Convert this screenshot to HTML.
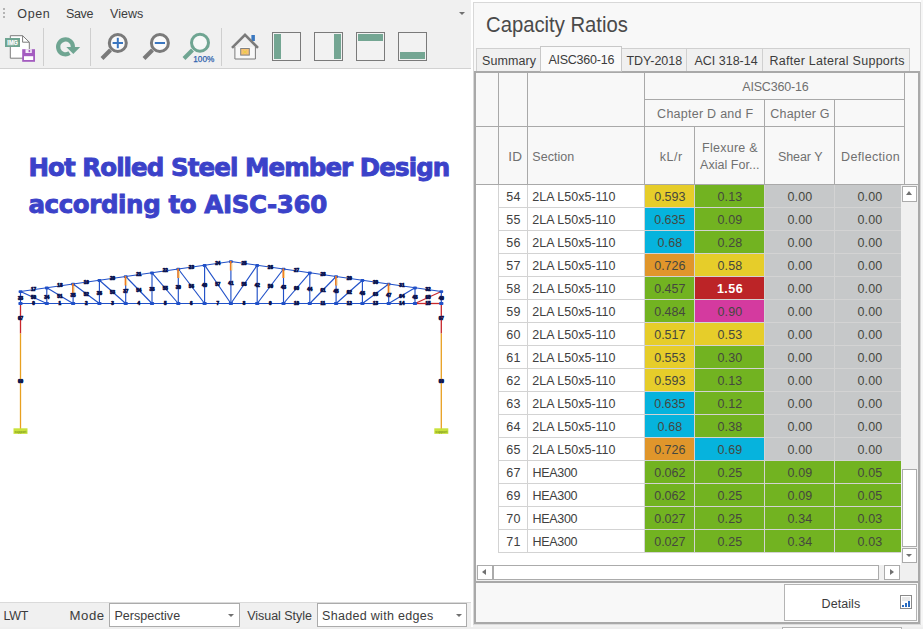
<!DOCTYPE html>
<html><head><meta charset="utf-8"><title>Capacity Ratios</title>
<style>
html,body{margin:0;padding:0;}
body{width:923px;height:629px;position:relative;overflow:hidden;background:#fff;font-family:"Liberation Sans",sans-serif;font-size:13px;color:#3c3c3c;}
div,span{position:absolute;box-sizing:border-box;white-space:nowrap;}
span{z-index:5;}
.t{line-height:16px;height:16px;}
/* left */
#lbar{left:0;top:0;width:471px;height:69px;background:#f0f0f0;border-bottom:1px solid #d2d2d2;}
#status{left:0;top:602px;width:471px;height:25px;background:#f0f0f0;border-top:1px solid #dadada;}
.sel{background:#fff;border:1px solid #ababab;height:24px;top:603px;}
.arr{width:0;height:0;border-left:3.5px solid transparent;border-right:3.5px solid transparent;border-top:3.5px solid #707070;}
.sep{width:1px;background:#cfcfcf;top:28px;height:38px;}
#title{left:29px;top:148px;font-family:"DejaVu Sans","Liberation Sans",sans-serif;font-weight:bold;color:#3b42c9;font-size:24px;line-height:37px;}
/* right */
#rp{left:473px;top:2px;width:448px;height:623px;background:#f8f8f8;border:1px solid #d8d8d8;}
#cap{left:487px;top:10px;font-size:21px;line-height:28px;color:#444;}
.tab{top:48px;height:24px;background:#f0f0f0;border:1px solid #d0d0d0;border-bottom:none;font-size:13px;line-height:22px;text-align:center;color:#3c3c3c;}
.tab.act{top:46px;height:27px;background:#fafafa;z-index:3;line-height:24px;border:1px solid #c8c8c8;border-bottom:1px solid #bdbdbd;height:26px;}
#grid{left:474px;top:71px;width:446px;height:512px;border:2px solid #a9a9a9;background:#f8f8f8;}
.vl{width:1px;background:#a9a9a9;}
.hl{height:1px;background:#a9a9a9;}
.hd{color:#6e6e6e;font-size:13px;line-height:16px;text-align:center;}
.c{height:23px;line-height:22px;font-size:13px;color:#404040;border-bottom:1px solid #d3d3d3;}
.c.id{left:498px;width:30px;background:#fff;border-left:1px solid #d3d3d3;border-right:1px solid #d3d3d3;text-align:center;}
.c.sec{left:528px;width:117px;background:#fff;border-right:1px solid #d3d3d3;padding-left:4px;}
.c.v{text-align:center;border-right:1px solid #d3d3d3;color:#46483c;}
.sb{background:#fff;border:1px solid #ababab;}
</style></head><body>

<!-- LEFT PANEL -->
<div id="lbar"></div>
<div style="left:3px;top:8px;width:2px;height:2px;background:#b4b4b4"></div>
<div style="left:3px;top:12px;width:2px;height:2px;background:#b4b4b4"></div>
<div style="left:3px;top:16px;width:2px;height:2px;background:#b4b4b4"></div>
<div class="arr" style="left:459px;top:12px;border-left-width:3px;border-right-width:3px;border-top-width:3px;"></div>
<div class="sep" style="left:43px"></div>
<div class="sep" style="left:90px"></div>
<div class="sep" style="left:221px"></div>

<svg style="position:absolute;left:0;top:24px" width="471" height="44" viewBox="0 24 471 44">
<!-- icon 1: save image -->
<path d="M10.3 35.7 H22.6 L29.3 42.2 V58.2 H10.3 Z" fill="#fff" stroke="#7c7c7c" stroke-width="1"/>
<path d="M22.6 35.7 V42.2 H29.3" fill="none" stroke="#7c7c7c" stroke-width="1"/>
<rect x="5" y="38" width="15" height="9" fill="#6fa592"/>
<text x="12.6" y="45.1" font-family="Liberation Sans, sans-serif" font-size="6.6" font-weight="bold" fill="#fff" stroke="#fff" stroke-width="0.25" text-anchor="middle" textLength="10.5" lengthAdjust="spacingAndGlyphs">IMG</text>
<rect x="22.2" y="49.2" width="12.8" height="12.6" fill="#a45cc0"/>
<rect x="25.5" y="49.2" width="6.3" height="3.8" fill="#f4ecf8"/>
<rect x="28.6" y="50" width="1.6" height="2.2" fill="#a45cc0"/>
<rect x="24" y="56.2" width="9.2" height="3.8" fill="#fff"/>
<!-- icon 2: refresh -->
<path d="M72.9 46.9 A7.4 7.4 0 1 0 69.5 53.1" fill="none" stroke="#6fa592" stroke-width="4.2"/>
<path d="M66.3 47 H80.2 L73.3 53.9 Z" fill="#6fa592"/>
<!-- zoom in -->
<g stroke="#7a7a7a" fill="none">
<line x1="110.5" y1="50" x2="102" y2="58.5" stroke-width="4"/>
<circle cx="117.8" cy="43" r="8.5" stroke-width="3" fill="#fafafa"/>
<line x1="152.5" y1="50" x2="144" y2="58.5" stroke-width="4"/>
<circle cx="159.9" cy="43" r="8.5" stroke-width="3" fill="#fafafa"/>
</g>
<g stroke="#3a76c0" stroke-width="2" fill="none">
<line x1="112.6" y1="43" x2="123" y2="43"/><line x1="117.8" y1="37.8" x2="117.8" y2="48.2"/>
<line x1="154.8" y1="43" x2="165" y2="43"/>
</g>
<!-- zoom 100 -->
<g stroke="#6fa592" fill="none">
<line x1="192.5" y1="50" x2="184" y2="58.5" stroke-width="4"/>
<circle cx="200" cy="42.8" r="8.5" stroke-width="3" fill="#f6f8f7"/>
</g>
<text x="193.3" y="61.8" font-family="Liberation Sans, sans-serif" font-size="8.6" fill="#2f62ae" stroke="#2f62ae" stroke-width="0.25" textLength="21" lengthAdjust="spacingAndGlyphs">100%</text>
<!-- home -->
<rect x="251.4" y="35" width="3.5" height="6" fill="#3a78c0"/>
<path d="M234.9 47 V59 H255.4 V47" fill="#f8f8f8" stroke="#7a7a7a" stroke-width="1"/>
<path d="M232 47.8 L245 34.8 L258 47.8" fill="none" stroke="#7a7a7a" stroke-width="2.6" stroke-linejoin="miter"/>
<rect x="240.7" y="48.5" width="8.6" height="6.6" fill="#f8c272" stroke="#808080" stroke-width="1"/>
<path d="M243 50.5 l4 3 m0 -3 l-4 3" stroke="#e8d040" stroke-width="0.9"/>
<!-- panels -->
<g fill="#f2f2f2" stroke="#7a7a7a" stroke-width="1">
<rect x="272.5" y="32.5" width="28" height="28"/>
<rect x="314.5" y="32.5" width="28" height="28"/>
<rect x="356.5" y="32.5" width="28" height="28"/>
<rect x="398.5" y="32.5" width="28" height="28"/>
</g>
<g fill="#74a693">
<rect x="274" y="34" width="7" height="25"/>
<rect x="334" y="34" width="7" height="25"/>
<rect x="358" y="34" width="25" height="7"/>
<rect x="400" y="52" width="25" height="7"/>
</g>

</svg>


<svg style="position:absolute;left:0;top:250px" width="471" height="200" viewBox="0 250 471 200" font-family="Liberation Sans, sans-serif" font-size="4.6" font-weight="bold" text-anchor="middle" fill="#0c1550">
<style>.tl text{stroke:#0c1550;stroke-width:0.7px}</style><g class="tl">
<line x1="20.5" y1="303.5" x2="20.5" y2="333.5" stroke="#c8282c" stroke-width="1.3"/>
<line x1="20.5" y1="333.5" x2="20.5" y2="431.0" stroke="#e8a020" stroke-width="1.3"/>
<line x1="441.3" y1="303.5" x2="441.3" y2="333.5" stroke="#c8282c" stroke-width="1.3"/>
<line x1="441.3" y1="333.5" x2="441.3" y2="431.0" stroke="#e8a020" stroke-width="1.3"/>
<line x1="20.5" y1="303.5" x2="441.3" y2="303.5" stroke="#2050c8" stroke-width="1.1"/>
<line x1="20.5" y1="291.5" x2="46.8" y2="287.8" stroke="#2050c8" stroke-width="1.1"/>
<line x1="46.8" y1="287.8" x2="73.1" y2="284.0" stroke="#2050c8" stroke-width="1.1"/>
<line x1="73.1" y1="284.0" x2="99.4" y2="280.2" stroke="#2050c8" stroke-width="1.1"/>
<line x1="99.4" y1="280.2" x2="125.7" y2="276.5" stroke="#2050c8" stroke-width="1.1"/>
<line x1="125.7" y1="276.5" x2="152.0" y2="272.8" stroke="#2050c8" stroke-width="1.1"/>
<line x1="152.0" y1="272.8" x2="178.3" y2="269.0" stroke="#2050c8" stroke-width="1.1"/>
<line x1="178.3" y1="269.0" x2="204.6" y2="265.2" stroke="#2050c8" stroke-width="1.1"/>
<line x1="204.6" y1="265.2" x2="230.9" y2="261.5" stroke="#2050c8" stroke-width="1.1"/>
<line x1="230.9" y1="261.5" x2="257.2" y2="265.2" stroke="#2050c8" stroke-width="1.1"/>
<line x1="257.2" y1="265.2" x2="283.5" y2="269.0" stroke="#2050c8" stroke-width="1.1"/>
<line x1="283.5" y1="269.0" x2="309.8" y2="272.8" stroke="#2050c8" stroke-width="1.1"/>
<line x1="309.8" y1="272.8" x2="336.1" y2="276.5" stroke="#2050c8" stroke-width="1.1"/>
<line x1="336.1" y1="276.5" x2="362.4" y2="280.2" stroke="#2050c8" stroke-width="1.1"/>
<line x1="362.4" y1="280.2" x2="388.7" y2="284.0" stroke="#2050c8" stroke-width="1.1"/>
<line x1="388.7" y1="284.0" x2="415.0" y2="287.8" stroke="#2050c8" stroke-width="1.1"/>
<line x1="415.0" y1="287.8" x2="441.3" y2="291.5" stroke="#2050c8" stroke-width="1.1"/>
<line x1="20.5" y1="291.5" x2="20.5" y2="303.5" stroke="#2050c8" stroke-width="1.15"/>
<line x1="46.8" y1="287.8" x2="46.8" y2="303.5" stroke="#2050c8" stroke-width="1.15"/>
<line x1="73.1" y1="284.0" x2="73.1" y2="303.5" stroke="#2050c8" stroke-width="1.15"/>
<line x1="99.4" y1="280.2" x2="99.4" y2="303.5" stroke="#2050c8" stroke-width="1.15"/>
<line x1="125.7" y1="276.5" x2="125.7" y2="303.5" stroke="#2050c8" stroke-width="1.15"/>
<line x1="152.0" y1="272.8" x2="152.0" y2="303.5" stroke="#2050c8" stroke-width="1.15"/>
<line x1="178.3" y1="269.0" x2="178.3" y2="303.5" stroke="#2050c8" stroke-width="1.15"/>
<line x1="204.6" y1="265.2" x2="204.6" y2="303.5" stroke="#2050c8" stroke-width="1.15"/>
<line x1="230.9" y1="261.5" x2="230.9" y2="303.5" stroke="#2050c8" stroke-width="1.15"/>
<line x1="257.2" y1="265.2" x2="257.2" y2="303.5" stroke="#2050c8" stroke-width="1.15"/>
<line x1="283.5" y1="269.0" x2="283.5" y2="303.5" stroke="#2050c8" stroke-width="1.15"/>
<line x1="309.8" y1="272.8" x2="309.8" y2="303.5" stroke="#2050c8" stroke-width="1.15"/>
<line x1="336.1" y1="276.5" x2="336.1" y2="303.5" stroke="#2050c8" stroke-width="1.15"/>
<line x1="362.4" y1="280.2" x2="362.4" y2="303.5" stroke="#2050c8" stroke-width="1.15"/>
<line x1="388.7" y1="284.0" x2="388.7" y2="303.5" stroke="#2050c8" stroke-width="1.15"/>
<line x1="415.0" y1="287.8" x2="415.0" y2="303.5" stroke="#2050c8" stroke-width="1.15"/>
<line x1="441.3" y1="291.5" x2="441.3" y2="303.5" stroke="#2050c8" stroke-width="1.15"/>
<line x1="20.5" y1="291.5" x2="46.8" y2="303.5" stroke="#2050c8" stroke-width="1.15"/>
<line x1="46.8" y1="287.8" x2="73.1" y2="303.5" stroke="#2050c8" stroke-width="1.15"/>
<line x1="73.1" y1="284.0" x2="99.4" y2="303.5" stroke="#2050c8" stroke-width="1.15"/>
<line x1="99.4" y1="280.2" x2="125.7" y2="303.5" stroke="#2050c8" stroke-width="1.15"/>
<line x1="125.7" y1="276.5" x2="152.0" y2="303.5" stroke="#2050c8" stroke-width="1.15"/>
<line x1="152.0" y1="272.8" x2="178.3" y2="303.5" stroke="#2050c8" stroke-width="1.15"/>
<line x1="178.3" y1="269.0" x2="204.6" y2="303.5" stroke="#2050c8" stroke-width="1.15"/>
<line x1="204.6" y1="265.2" x2="230.9" y2="303.5" stroke="#2050c8" stroke-width="1.15"/>
<line x1="257.2" y1="265.2" x2="230.9" y2="303.5" stroke="#2050c8" stroke-width="1.15"/>
<line x1="283.5" y1="269.0" x2="257.2" y2="303.5" stroke="#2050c8" stroke-width="1.15"/>
<line x1="309.8" y1="272.8" x2="283.5" y2="303.5" stroke="#2050c8" stroke-width="1.15"/>
<line x1="336.1" y1="276.5" x2="309.8" y2="303.5" stroke="#2050c8" stroke-width="1.15"/>
<line x1="362.4" y1="280.2" x2="336.1" y2="303.5" stroke="#2050c8" stroke-width="1.15"/>
<line x1="388.7" y1="284.0" x2="362.4" y2="303.5" stroke="#2050c8" stroke-width="1.15"/>
<line x1="415.0" y1="287.8" x2="388.7" y2="303.5" stroke="#2050c8" stroke-width="1.15"/>
<line x1="441.3" y1="291.5" x2="415.0" y2="303.5" stroke="#c8282c" stroke-width="1.15"/>
<line x1="415.0" y1="303.5" x2="441.3" y2="303.5" stroke="#c8282c" stroke-width="1.3"/>
<rect x="18.4" y="302.0" width="4.2" height="3" rx="0.8" fill="#2050c8"/>
<rect x="18.6" y="290.3" width="3.8" height="2.8" rx="0.8" fill="#2050c8"/>
<rect x="44.7" y="302.0" width="4.2" height="3" rx="0.8" fill="#2050c8"/>
<rect x="44.9" y="286.6" width="3.8" height="2.8" rx="0.8" fill="#2050c8"/>
<rect x="71.0" y="302.0" width="4.2" height="3" rx="0.8" fill="#2050c8"/>
<rect x="71.2" y="282.8" width="3.8" height="2.8" rx="0.8" fill="#2050c8"/>
<rect x="97.3" y="302.0" width="4.2" height="3" rx="0.8" fill="#2050c8"/>
<rect x="97.5" y="279.1" width="3.8" height="2.8" rx="0.8" fill="#2050c8"/>
<rect x="123.6" y="302.0" width="4.2" height="3" rx="0.8" fill="#2050c8"/>
<rect x="123.8" y="275.3" width="3.8" height="2.8" rx="0.8" fill="#2050c8"/>
<rect x="149.9" y="302.0" width="4.2" height="3" rx="0.8" fill="#2050c8"/>
<rect x="150.1" y="271.6" width="3.8" height="2.8" rx="0.8" fill="#2050c8"/>
<rect x="176.2" y="302.0" width="4.2" height="3" rx="0.8" fill="#2050c8"/>
<rect x="176.4" y="267.8" width="3.8" height="2.8" rx="0.8" fill="#2050c8"/>
<rect x="202.5" y="302.0" width="4.2" height="3" rx="0.8" fill="#2050c8"/>
<rect x="202.7" y="264.1" width="3.8" height="2.8" rx="0.8" fill="#2050c8"/>
<rect x="228.8" y="302.0" width="4.2" height="3" rx="0.8" fill="#2050c8"/>
<rect x="229.0" y="260.3" width="3.8" height="2.8" rx="0.8" fill="#2050c8"/>
<rect x="255.1" y="302.0" width="4.2" height="3" rx="0.8" fill="#2050c8"/>
<rect x="255.3" y="264.1" width="3.8" height="2.8" rx="0.8" fill="#2050c8"/>
<rect x="281.4" y="302.0" width="4.2" height="3" rx="0.8" fill="#2050c8"/>
<rect x="281.6" y="267.8" width="3.8" height="2.8" rx="0.8" fill="#2050c8"/>
<rect x="307.7" y="302.0" width="4.2" height="3" rx="0.8" fill="#2050c8"/>
<rect x="307.9" y="271.6" width="3.8" height="2.8" rx="0.8" fill="#2050c8"/>
<rect x="334.0" y="302.0" width="4.2" height="3" rx="0.8" fill="#2050c8"/>
<rect x="334.2" y="275.3" width="3.8" height="2.8" rx="0.8" fill="#2050c8"/>
<rect x="360.3" y="302.0" width="4.2" height="3" rx="0.8" fill="#2050c8"/>
<rect x="360.5" y="279.1" width="3.8" height="2.8" rx="0.8" fill="#2050c8"/>
<rect x="386.6" y="302.0" width="4.2" height="3" rx="0.8" fill="#2050c8"/>
<rect x="386.8" y="282.8" width="3.8" height="2.8" rx="0.8" fill="#2050c8"/>
<rect x="412.9" y="302.0" width="4.2" height="3" rx="0.8" fill="#2050c8"/>
<rect x="413.1" y="286.6" width="3.8" height="2.8" rx="0.8" fill="#2050c8"/>
<rect x="439.2" y="302.0" width="4.2" height="3" rx="0.8" fill="#2050c8"/>
<rect x="439.4" y="290.3" width="3.8" height="2.8" rx="0.8" fill="#2050c8"/>
<line x1="72.9" y1="283.5" x2="72.9" y2="293.0" stroke="#f07a1e" stroke-width="1.7"/>
<line x1="74.1" y1="286.0" x2="74.1" y2="293.0" stroke="#f8dc98" stroke-width="1.1"/>
<line x1="125.5" y1="276.0" x2="125.5" y2="285.5" stroke="#f07a1e" stroke-width="1.7"/>
<line x1="126.7" y1="278.5" x2="126.7" y2="285.5" stroke="#f8dc98" stroke-width="1.1"/>
<line x1="178.1" y1="268.5" x2="178.1" y2="278.0" stroke="#f07a1e" stroke-width="1.7"/>
<line x1="179.3" y1="271.0" x2="179.3" y2="278.0" stroke="#f8dc98" stroke-width="1.1"/>
<line x1="230.7" y1="261.0" x2="230.7" y2="270.5" stroke="#f07a1e" stroke-width="1.7"/>
<line x1="231.9" y1="263.5" x2="231.9" y2="270.5" stroke="#f8dc98" stroke-width="1.1"/>
<line x1="283.3" y1="268.5" x2="283.3" y2="278.0" stroke="#f07a1e" stroke-width="1.7"/>
<line x1="284.5" y1="271.0" x2="284.5" y2="278.0" stroke="#f8dc98" stroke-width="1.1"/>
<line x1="335.9" y1="276.0" x2="335.9" y2="285.5" stroke="#f07a1e" stroke-width="1.7"/>
<line x1="337.1" y1="278.5" x2="337.1" y2="285.5" stroke="#f8dc98" stroke-width="1.1"/>
<line x1="388.5" y1="283.5" x2="388.5" y2="293.0" stroke="#f07a1e" stroke-width="1.7"/>
<line x1="389.7" y1="286.0" x2="389.7" y2="293.0" stroke="#f8dc98" stroke-width="1.1"/>
<text x="33.6" y="305.2">0</text>
<text x="33.6" y="291.0">17</text>
<text x="59.9" y="305.2">1</text>
<text x="59.9" y="287.3">18</text>
<text x="86.2" y="305.2">2</text>
<text x="86.2" y="283.5">19</text>
<text x="112.6" y="305.2">3</text>
<text x="112.6" y="279.8">20</text>
<text x="138.8" y="305.2">4</text>
<text x="138.8" y="276.0">21</text>
<text x="165.2" y="305.2">5</text>
<text x="165.2" y="272.3">22</text>
<text x="191.4" y="305.2">6</text>
<text x="191.4" y="268.5">23</text>
<text x="217.8" y="305.2">7</text>
<text x="217.8" y="264.8">24</text>
<text x="244.1" y="305.2">8</text>
<text x="244.1" y="264.8">25</text>
<text x="270.4" y="305.2">9</text>
<text x="270.4" y="268.5">26</text>
<text x="296.6" y="305.2">10</text>
<text x="296.6" y="272.3">27</text>
<text x="323.0" y="305.2">11</text>
<text x="323.0" y="276.0">28</text>
<text x="349.2" y="305.2">12</text>
<text x="349.2" y="279.8">29</text>
<text x="375.6" y="305.2">13</text>
<text x="375.6" y="283.5">30</text>
<text x="401.9" y="305.2">14</text>
<text x="401.9" y="287.3">31</text>
<text x="428.1" y="305.2">15</text>
<text x="428.1" y="291.0">32</text>
<text x="20.5" y="300.4">33</text>
<text x="46.8" y="298.5">34</text>
<text x="73.1" y="296.6">35</text>
<text x="99.4" y="294.8">36</text>
<text x="125.7" y="292.9">37</text>
<text x="152.0" y="291.0">38</text>
<text x="178.3" y="289.1">39</text>
<text x="204.6" y="287.3">40</text>
<text x="230.9" y="285.4">41</text>
<text x="257.2" y="287.3">42</text>
<text x="283.5" y="289.1">43</text>
<text x="309.8" y="291.0">44</text>
<text x="336.1" y="292.9">45</text>
<text x="362.4" y="294.8">46</text>
<text x="388.7" y="296.6">47</text>
<text x="415.0" y="298.5">48</text>
<text x="441.3" y="300.4">49</text>
<text x="33.6" y="299.4">50</text>
<text x="59.9" y="297.5">51</text>
<text x="86.2" y="295.6">52</text>
<text x="112.6" y="293.8">53</text>
<text x="138.8" y="291.9">54</text>
<text x="165.2" y="290.0">55</text>
<text x="191.4" y="288.1">56</text>
<text x="217.8" y="286.3">57</text>
<text x="244.1" y="286.3">58</text>
<text x="270.4" y="288.1">59</text>
<text x="296.6" y="290.0">60</text>
<text x="323.0" y="291.9">61</text>
<text x="349.2" y="293.8">62</text>
<text x="375.6" y="295.6">63</text>
<text x="401.9" y="297.5">64</text>
<text x="428.1" y="299.4">65</text>
<text x="20.5" y="320.4">67</text>
<text x="20.5" y="383.4">69</text>
<text x="441.3" y="320.4">67</text>
<text x="441.3" y="383.4">69</text>
<rect x="13.5" y="428.3" width="14" height="5.6" fill="#c9e23c"/>
<text x="20.5" y="432.6" style="font-size:3.2px;fill:#7a9a20;stroke:none">support</text>
<rect x="434.3" y="428.3" width="14" height="5.6" fill="#c9e23c"/>
<text x="441.3" y="432.6" style="font-size:3.2px;fill:#7a9a20;stroke:none">support</text>
</g></svg>

<div id="status"></div>
<div class="sel" style="left:109px;width:131px;"></div>
<div class="arr" style="left:228px;top:614px;"></div>
<div class="sel" style="left:317px;width:150px;"></div>
<div class="arr" style="left:456px;top:614px;"></div>

<!-- RIGHT PANEL -->
<div style="left:921px;top:0;width:2px;height:625px;background:#f6f6f6"></div>
<div id="rp"></div>
<div class="tab" style="left:476px;width:65px;"></div>
<div class="tab act" style="left:540px;width:82px;"></div>
<div class="tab" style="left:621px;width:66px;"></div>
<div class="tab" style="left:686px;width:77px;"></div>
<div class="tab" style="left:762px;width:148px;"></div>

<div id="grid"></div>
<!-- header lines -->
<div class="vl" style="left:498px;top:73px;height:112px"></div>
<div class="vl" style="left:527px;top:73px;height:112px"></div>
<div class="vl" style="left:644px;top:73px;height:112px"></div>
<div class="vl" style="left:694px;top:126px;height:59px"></div>
<div class="vl" style="left:764px;top:99px;height:86px"></div>
<div class="vl" style="left:834px;top:99px;height:86px"></div>
<div class="vl" style="left:904px;top:73px;height:112px"></div>
<div class="hl" style="left:644px;top:99px;width:261px"></div>
<div class="hl" style="left:476px;top:126px;width:429px"></div>
<div class="hl" style="left:476px;top:184px;width:442px"></div>

<!-- body white area -->
<div style="left:476px;top:185px;width:442px;height:381px;background:#fff"></div>
<div class="c id" style="top:185px"></div>
<div class="c sec" style="top:185px"></div>
<span style="left:506.3px;top:189px;font:normal 12.5px/16px 'Liberation Sans',sans-serif;letter-spacing:0.30px;color:#404040;">54</span>
<span style="left:532.3px;top:189px;font:normal 12.5px/16px 'Liberation Sans',sans-serif;letter-spacing:0.00px;color:#404040;">2LA L50x5-110</span>
<div class="c v" style="top:185px;left:645px;width:50px;background:#e6cd2a;"></div>
<span style="left:654.3px;top:189px;font:normal 12.5px/16px 'Liberation Sans',sans-serif;letter-spacing:-0.05px;color:#45473f;">0.593</span>
<div class="c v" style="top:185px;left:695px;width:70px;background:#72b321;"></div>
<span style="left:717.5px;top:189px;font:normal 12.5px/16px 'Liberation Sans',sans-serif;letter-spacing:0.12px;color:#45473f;">0.13</span>
<div class="c v" style="top:185px;left:765px;width:70px;background:#c6c8c9;"></div>
<span style="left:787.5px;top:189px;font:normal 12.5px/16px 'Liberation Sans',sans-serif;letter-spacing:0.12px;color:#45473f;">0.00</span>
<div class="c v" style="top:185px;left:835px;width:70px;background:#c6c8c9;"></div>
<span style="left:857.5px;top:189px;font:normal 12.5px/16px 'Liberation Sans',sans-serif;letter-spacing:0.12px;color:#45473f;">0.00</span>
<div class="c id" style="top:208px"></div>
<div class="c sec" style="top:208px"></div>
<span style="left:506.3px;top:212px;font:normal 12.5px/16px 'Liberation Sans',sans-serif;letter-spacing:0.30px;color:#404040;">55</span>
<span style="left:532.3px;top:212px;font:normal 12.5px/16px 'Liberation Sans',sans-serif;letter-spacing:0.00px;color:#404040;">2LA L50x5-110</span>
<div class="c v" style="top:208px;left:645px;width:50px;background:#06b3dd;"></div>
<span style="left:654.3px;top:212px;font:normal 12.5px/16px 'Liberation Sans',sans-serif;letter-spacing:-0.05px;color:#45473f;">0.635</span>
<div class="c v" style="top:208px;left:695px;width:70px;background:#72b321;"></div>
<span style="left:717.5px;top:212px;font:normal 12.5px/16px 'Liberation Sans',sans-serif;letter-spacing:0.12px;color:#45473f;">0.09</span>
<div class="c v" style="top:208px;left:765px;width:70px;background:#c6c8c9;"></div>
<span style="left:787.5px;top:212px;font:normal 12.5px/16px 'Liberation Sans',sans-serif;letter-spacing:0.12px;color:#45473f;">0.00</span>
<div class="c v" style="top:208px;left:835px;width:70px;background:#c6c8c9;"></div>
<span style="left:857.5px;top:212px;font:normal 12.5px/16px 'Liberation Sans',sans-serif;letter-spacing:0.12px;color:#45473f;">0.00</span>
<div class="c id" style="top:231px"></div>
<div class="c sec" style="top:231px"></div>
<span style="left:506.3px;top:235px;font:normal 12.5px/16px 'Liberation Sans',sans-serif;letter-spacing:0.30px;color:#404040;">56</span>
<span style="left:532.3px;top:235px;font:normal 12.5px/16px 'Liberation Sans',sans-serif;letter-spacing:0.00px;color:#404040;">2LA L50x5-110</span>
<div class="c v" style="top:231px;left:645px;width:50px;background:#06b3dd;"></div>
<span style="left:657.5px;top:235px;font:normal 12.5px/16px 'Liberation Sans',sans-serif;letter-spacing:0.12px;color:#45473f;">0.68</span>
<div class="c v" style="top:231px;left:695px;width:70px;background:#72b321;"></div>
<span style="left:717.5px;top:235px;font:normal 12.5px/16px 'Liberation Sans',sans-serif;letter-spacing:0.12px;color:#45473f;">0.28</span>
<div class="c v" style="top:231px;left:765px;width:70px;background:#c6c8c9;"></div>
<span style="left:787.5px;top:235px;font:normal 12.5px/16px 'Liberation Sans',sans-serif;letter-spacing:0.12px;color:#45473f;">0.00</span>
<div class="c v" style="top:231px;left:835px;width:70px;background:#c6c8c9;"></div>
<span style="left:857.5px;top:235px;font:normal 12.5px/16px 'Liberation Sans',sans-serif;letter-spacing:0.12px;color:#45473f;">0.00</span>
<div class="c id" style="top:254px"></div>
<div class="c sec" style="top:254px"></div>
<span style="left:506.3px;top:258px;font:normal 12.5px/16px 'Liberation Sans',sans-serif;letter-spacing:0.30px;color:#404040;">57</span>
<span style="left:532.3px;top:258px;font:normal 12.5px/16px 'Liberation Sans',sans-serif;letter-spacing:0.00px;color:#404040;">2LA L50x5-110</span>
<div class="c v" style="top:254px;left:645px;width:50px;background:#e0962b;"></div>
<span style="left:654.3px;top:258px;font:normal 12.5px/16px 'Liberation Sans',sans-serif;letter-spacing:-0.05px;color:#45473f;">0.726</span>
<div class="c v" style="top:254px;left:695px;width:70px;background:#e6cd2a;"></div>
<span style="left:717.5px;top:258px;font:normal 12.5px/16px 'Liberation Sans',sans-serif;letter-spacing:0.12px;color:#45473f;">0.58</span>
<div class="c v" style="top:254px;left:765px;width:70px;background:#c6c8c9;"></div>
<span style="left:787.5px;top:258px;font:normal 12.5px/16px 'Liberation Sans',sans-serif;letter-spacing:0.12px;color:#45473f;">0.00</span>
<div class="c v" style="top:254px;left:835px;width:70px;background:#c6c8c9;"></div>
<span style="left:857.5px;top:258px;font:normal 12.5px/16px 'Liberation Sans',sans-serif;letter-spacing:0.12px;color:#45473f;">0.00</span>
<div class="c id" style="top:277px"></div>
<div class="c sec" style="top:277px"></div>
<span style="left:506.3px;top:281px;font:normal 12.5px/16px 'Liberation Sans',sans-serif;letter-spacing:0.30px;color:#404040;">58</span>
<span style="left:532.3px;top:281px;font:normal 12.5px/16px 'Liberation Sans',sans-serif;letter-spacing:0.00px;color:#404040;">2LA L50x5-110</span>
<div class="c v" style="top:277px;left:645px;width:50px;background:#72b321;"></div>
<span style="left:654.3px;top:281px;font:normal 12.5px/16px 'Liberation Sans',sans-serif;letter-spacing:-0.05px;color:#45473f;">0.457</span>
<div class="c v" style="top:277px;left:695px;width:70px;background:#bc2427;"></div>
<span style="left:716.9px;top:281px;font:bold 12.5px/16px 'Liberation Sans',sans-serif;letter-spacing:0.52px;color:#ffffff;">1.56</span>
<div class="c v" style="top:277px;left:765px;width:70px;background:#c6c8c9;"></div>
<span style="left:787.5px;top:281px;font:normal 12.5px/16px 'Liberation Sans',sans-serif;letter-spacing:0.12px;color:#45473f;">0.00</span>
<div class="c v" style="top:277px;left:835px;width:70px;background:#c6c8c9;"></div>
<span style="left:857.5px;top:281px;font:normal 12.5px/16px 'Liberation Sans',sans-serif;letter-spacing:0.12px;color:#45473f;">0.00</span>
<div class="c id" style="top:300px"></div>
<div class="c sec" style="top:300px"></div>
<span style="left:506.3px;top:304px;font:normal 12.5px/16px 'Liberation Sans',sans-serif;letter-spacing:0.30px;color:#404040;">59</span>
<span style="left:532.3px;top:304px;font:normal 12.5px/16px 'Liberation Sans',sans-serif;letter-spacing:0.00px;color:#404040;">2LA L50x5-110</span>
<div class="c v" style="top:300px;left:645px;width:50px;background:#72b321;"></div>
<span style="left:654.3px;top:304px;font:normal 12.5px/16px 'Liberation Sans',sans-serif;letter-spacing:-0.05px;color:#45473f;">0.484</span>
<div class="c v" style="top:300px;left:695px;width:70px;background:#d43a9f;"></div>
<span style="left:717.5px;top:304px;font:normal 12.5px/16px 'Liberation Sans',sans-serif;letter-spacing:0.12px;color:#45473f;">0.90</span>
<div class="c v" style="top:300px;left:765px;width:70px;background:#c6c8c9;"></div>
<span style="left:787.5px;top:304px;font:normal 12.5px/16px 'Liberation Sans',sans-serif;letter-spacing:0.12px;color:#45473f;">0.00</span>
<div class="c v" style="top:300px;left:835px;width:70px;background:#c6c8c9;"></div>
<span style="left:857.5px;top:304px;font:normal 12.5px/16px 'Liberation Sans',sans-serif;letter-spacing:0.12px;color:#45473f;">0.00</span>
<div class="c id" style="top:323px"></div>
<div class="c sec" style="top:323px"></div>
<span style="left:506.3px;top:327px;font:normal 12.5px/16px 'Liberation Sans',sans-serif;letter-spacing:0.30px;color:#404040;">60</span>
<span style="left:532.3px;top:327px;font:normal 12.5px/16px 'Liberation Sans',sans-serif;letter-spacing:0.00px;color:#404040;">2LA L50x5-110</span>
<div class="c v" style="top:323px;left:645px;width:50px;background:#e6cd2a;"></div>
<span style="left:654.3px;top:327px;font:normal 12.5px/16px 'Liberation Sans',sans-serif;letter-spacing:-0.05px;color:#45473f;">0.517</span>
<div class="c v" style="top:323px;left:695px;width:70px;background:#e6cd2a;"></div>
<span style="left:717.5px;top:327px;font:normal 12.5px/16px 'Liberation Sans',sans-serif;letter-spacing:0.12px;color:#45473f;">0.53</span>
<div class="c v" style="top:323px;left:765px;width:70px;background:#c6c8c9;"></div>
<span style="left:787.5px;top:327px;font:normal 12.5px/16px 'Liberation Sans',sans-serif;letter-spacing:0.12px;color:#45473f;">0.00</span>
<div class="c v" style="top:323px;left:835px;width:70px;background:#c6c8c9;"></div>
<span style="left:857.5px;top:327px;font:normal 12.5px/16px 'Liberation Sans',sans-serif;letter-spacing:0.12px;color:#45473f;">0.00</span>
<div class="c id" style="top:346px"></div>
<div class="c sec" style="top:346px"></div>
<span style="left:506.3px;top:350px;font:normal 12.5px/16px 'Liberation Sans',sans-serif;letter-spacing:0.30px;color:#404040;">61</span>
<span style="left:532.3px;top:350px;font:normal 12.5px/16px 'Liberation Sans',sans-serif;letter-spacing:0.00px;color:#404040;">2LA L50x5-110</span>
<div class="c v" style="top:346px;left:645px;width:50px;background:#e6cd2a;"></div>
<span style="left:654.3px;top:350px;font:normal 12.5px/16px 'Liberation Sans',sans-serif;letter-spacing:-0.05px;color:#45473f;">0.553</span>
<div class="c v" style="top:346px;left:695px;width:70px;background:#72b321;"></div>
<span style="left:717.5px;top:350px;font:normal 12.5px/16px 'Liberation Sans',sans-serif;letter-spacing:0.12px;color:#45473f;">0.30</span>
<div class="c v" style="top:346px;left:765px;width:70px;background:#c6c8c9;"></div>
<span style="left:787.5px;top:350px;font:normal 12.5px/16px 'Liberation Sans',sans-serif;letter-spacing:0.12px;color:#45473f;">0.00</span>
<div class="c v" style="top:346px;left:835px;width:70px;background:#c6c8c9;"></div>
<span style="left:857.5px;top:350px;font:normal 12.5px/16px 'Liberation Sans',sans-serif;letter-spacing:0.12px;color:#45473f;">0.00</span>
<div class="c id" style="top:369px"></div>
<div class="c sec" style="top:369px"></div>
<span style="left:506.3px;top:373px;font:normal 12.5px/16px 'Liberation Sans',sans-serif;letter-spacing:0.30px;color:#404040;">62</span>
<span style="left:532.3px;top:373px;font:normal 12.5px/16px 'Liberation Sans',sans-serif;letter-spacing:0.00px;color:#404040;">2LA L50x5-110</span>
<div class="c v" style="top:369px;left:645px;width:50px;background:#e6cd2a;"></div>
<span style="left:654.3px;top:373px;font:normal 12.5px/16px 'Liberation Sans',sans-serif;letter-spacing:-0.05px;color:#45473f;">0.593</span>
<div class="c v" style="top:369px;left:695px;width:70px;background:#72b321;"></div>
<span style="left:717.5px;top:373px;font:normal 12.5px/16px 'Liberation Sans',sans-serif;letter-spacing:0.12px;color:#45473f;">0.13</span>
<div class="c v" style="top:369px;left:765px;width:70px;background:#c6c8c9;"></div>
<span style="left:787.5px;top:373px;font:normal 12.5px/16px 'Liberation Sans',sans-serif;letter-spacing:0.12px;color:#45473f;">0.00</span>
<div class="c v" style="top:369px;left:835px;width:70px;background:#c6c8c9;"></div>
<span style="left:857.5px;top:373px;font:normal 12.5px/16px 'Liberation Sans',sans-serif;letter-spacing:0.12px;color:#45473f;">0.00</span>
<div class="c id" style="top:392px"></div>
<div class="c sec" style="top:392px"></div>
<span style="left:506.3px;top:396px;font:normal 12.5px/16px 'Liberation Sans',sans-serif;letter-spacing:0.30px;color:#404040;">63</span>
<span style="left:532.3px;top:396px;font:normal 12.5px/16px 'Liberation Sans',sans-serif;letter-spacing:0.00px;color:#404040;">2LA L50x5-110</span>
<div class="c v" style="top:392px;left:645px;width:50px;background:#06b3dd;"></div>
<span style="left:654.3px;top:396px;font:normal 12.5px/16px 'Liberation Sans',sans-serif;letter-spacing:-0.05px;color:#45473f;">0.635</span>
<div class="c v" style="top:392px;left:695px;width:70px;background:#72b321;"></div>
<span style="left:717.5px;top:396px;font:normal 12.5px/16px 'Liberation Sans',sans-serif;letter-spacing:0.12px;color:#45473f;">0.12</span>
<div class="c v" style="top:392px;left:765px;width:70px;background:#c6c8c9;"></div>
<span style="left:787.5px;top:396px;font:normal 12.5px/16px 'Liberation Sans',sans-serif;letter-spacing:0.12px;color:#45473f;">0.00</span>
<div class="c v" style="top:392px;left:835px;width:70px;background:#c6c8c9;"></div>
<span style="left:857.5px;top:396px;font:normal 12.5px/16px 'Liberation Sans',sans-serif;letter-spacing:0.12px;color:#45473f;">0.00</span>
<div class="c id" style="top:415px"></div>
<div class="c sec" style="top:415px"></div>
<span style="left:506.3px;top:419px;font:normal 12.5px/16px 'Liberation Sans',sans-serif;letter-spacing:0.30px;color:#404040;">64</span>
<span style="left:532.3px;top:419px;font:normal 12.5px/16px 'Liberation Sans',sans-serif;letter-spacing:0.00px;color:#404040;">2LA L50x5-110</span>
<div class="c v" style="top:415px;left:645px;width:50px;background:#06b3dd;"></div>
<span style="left:657.5px;top:419px;font:normal 12.5px/16px 'Liberation Sans',sans-serif;letter-spacing:0.12px;color:#45473f;">0.68</span>
<div class="c v" style="top:415px;left:695px;width:70px;background:#72b321;"></div>
<span style="left:717.5px;top:419px;font:normal 12.5px/16px 'Liberation Sans',sans-serif;letter-spacing:0.12px;color:#45473f;">0.38</span>
<div class="c v" style="top:415px;left:765px;width:70px;background:#c6c8c9;"></div>
<span style="left:787.5px;top:419px;font:normal 12.5px/16px 'Liberation Sans',sans-serif;letter-spacing:0.12px;color:#45473f;">0.00</span>
<div class="c v" style="top:415px;left:835px;width:70px;background:#c6c8c9;"></div>
<span style="left:857.5px;top:419px;font:normal 12.5px/16px 'Liberation Sans',sans-serif;letter-spacing:0.12px;color:#45473f;">0.00</span>
<div class="c id" style="top:438px"></div>
<div class="c sec" style="top:438px"></div>
<span style="left:506.3px;top:442px;font:normal 12.5px/16px 'Liberation Sans',sans-serif;letter-spacing:0.30px;color:#404040;">65</span>
<span style="left:532.3px;top:442px;font:normal 12.5px/16px 'Liberation Sans',sans-serif;letter-spacing:0.00px;color:#404040;">2LA L50x5-110</span>
<div class="c v" style="top:438px;left:645px;width:50px;background:#e0962b;"></div>
<span style="left:654.3px;top:442px;font:normal 12.5px/16px 'Liberation Sans',sans-serif;letter-spacing:-0.05px;color:#45473f;">0.726</span>
<div class="c v" style="top:438px;left:695px;width:70px;background:#06b3dd;"></div>
<span style="left:717.5px;top:442px;font:normal 12.5px/16px 'Liberation Sans',sans-serif;letter-spacing:0.12px;color:#45473f;">0.69</span>
<div class="c v" style="top:438px;left:765px;width:70px;background:#c6c8c9;"></div>
<span style="left:787.5px;top:442px;font:normal 12.5px/16px 'Liberation Sans',sans-serif;letter-spacing:0.12px;color:#45473f;">0.00</span>
<div class="c v" style="top:438px;left:835px;width:70px;background:#c6c8c9;"></div>
<span style="left:857.5px;top:442px;font:normal 12.5px/16px 'Liberation Sans',sans-serif;letter-spacing:0.12px;color:#45473f;">0.00</span>
<div class="c id" style="top:461px"></div>
<div class="c sec" style="top:461px"></div>
<span style="left:506.3px;top:465px;font:normal 12.5px/16px 'Liberation Sans',sans-serif;letter-spacing:0.30px;color:#404040;">67</span>
<span style="left:532.6px;top:465px;font:normal 12.5px/16px 'Liberation Sans',sans-serif;letter-spacing:-0.33px;color:#404040;">HEA300</span>
<div class="c v" style="top:461px;left:645px;width:50px;background:#72b321;"></div>
<span style="left:654.3px;top:465px;font:normal 12.5px/16px 'Liberation Sans',sans-serif;letter-spacing:-0.05px;color:#45473f;">0.062</span>
<div class="c v" style="top:461px;left:695px;width:70px;background:#72b321;"></div>
<span style="left:717.5px;top:465px;font:normal 12.5px/16px 'Liberation Sans',sans-serif;letter-spacing:0.12px;color:#45473f;">0.25</span>
<div class="c v" style="top:461px;left:765px;width:70px;background:#72b321;"></div>
<span style="left:787.5px;top:465px;font:normal 12.5px/16px 'Liberation Sans',sans-serif;letter-spacing:0.12px;color:#45473f;">0.09</span>
<div class="c v" style="top:461px;left:835px;width:70px;background:#72b321;"></div>
<span style="left:857.5px;top:465px;font:normal 12.5px/16px 'Liberation Sans',sans-serif;letter-spacing:0.12px;color:#45473f;">0.05</span>
<div class="c id" style="top:484px"></div>
<div class="c sec" style="top:484px"></div>
<span style="left:506.3px;top:488px;font:normal 12.5px/16px 'Liberation Sans',sans-serif;letter-spacing:0.30px;color:#404040;">69</span>
<span style="left:532.6px;top:488px;font:normal 12.5px/16px 'Liberation Sans',sans-serif;letter-spacing:-0.33px;color:#404040;">HEA300</span>
<div class="c v" style="top:484px;left:645px;width:50px;background:#72b321;"></div>
<span style="left:654.3px;top:488px;font:normal 12.5px/16px 'Liberation Sans',sans-serif;letter-spacing:-0.05px;color:#45473f;">0.062</span>
<div class="c v" style="top:484px;left:695px;width:70px;background:#72b321;"></div>
<span style="left:717.5px;top:488px;font:normal 12.5px/16px 'Liberation Sans',sans-serif;letter-spacing:0.12px;color:#45473f;">0.25</span>
<div class="c v" style="top:484px;left:765px;width:70px;background:#72b321;"></div>
<span style="left:787.5px;top:488px;font:normal 12.5px/16px 'Liberation Sans',sans-serif;letter-spacing:0.12px;color:#45473f;">0.09</span>
<div class="c v" style="top:484px;left:835px;width:70px;background:#72b321;"></div>
<span style="left:857.5px;top:488px;font:normal 12.5px/16px 'Liberation Sans',sans-serif;letter-spacing:0.12px;color:#45473f;">0.05</span>
<div class="c id" style="top:507px"></div>
<div class="c sec" style="top:507px"></div>
<span style="left:506.3px;top:511px;font:normal 12.5px/16px 'Liberation Sans',sans-serif;letter-spacing:0.30px;color:#404040;">70</span>
<span style="left:532.6px;top:511px;font:normal 12.5px/16px 'Liberation Sans',sans-serif;letter-spacing:-0.33px;color:#404040;">HEA300</span>
<div class="c v" style="top:507px;left:645px;width:50px;background:#72b321;"></div>
<span style="left:654.3px;top:511px;font:normal 12.5px/16px 'Liberation Sans',sans-serif;letter-spacing:-0.05px;color:#45473f;">0.027</span>
<div class="c v" style="top:507px;left:695px;width:70px;background:#72b321;"></div>
<span style="left:717.5px;top:511px;font:normal 12.5px/16px 'Liberation Sans',sans-serif;letter-spacing:0.12px;color:#45473f;">0.25</span>
<div class="c v" style="top:507px;left:765px;width:70px;background:#72b321;"></div>
<span style="left:787.5px;top:511px;font:normal 12.5px/16px 'Liberation Sans',sans-serif;letter-spacing:0.12px;color:#45473f;">0.34</span>
<div class="c v" style="top:507px;left:835px;width:70px;background:#72b321;"></div>
<span style="left:857.5px;top:511px;font:normal 12.5px/16px 'Liberation Sans',sans-serif;letter-spacing:0.12px;color:#45473f;">0.03</span>
<div class="c id" style="top:530px"></div>
<div class="c sec" style="top:530px"></div>
<span style="left:506.3px;top:534px;font:normal 12.5px/16px 'Liberation Sans',sans-serif;letter-spacing:0.30px;color:#404040;">71</span>
<span style="left:532.6px;top:534px;font:normal 12.5px/16px 'Liberation Sans',sans-serif;letter-spacing:-0.33px;color:#404040;">HEA300</span>
<div class="c v" style="top:530px;left:645px;width:50px;background:#72b321;"></div>
<span style="left:654.3px;top:534px;font:normal 12.5px/16px 'Liberation Sans',sans-serif;letter-spacing:-0.05px;color:#45473f;">0.027</span>
<div class="c v" style="top:530px;left:695px;width:70px;background:#72b321;"></div>
<span style="left:717.5px;top:534px;font:normal 12.5px/16px 'Liberation Sans',sans-serif;letter-spacing:0.12px;color:#45473f;">0.25</span>
<div class="c v" style="top:530px;left:765px;width:70px;background:#72b321;"></div>
<span style="left:787.5px;top:534px;font:normal 12.5px/16px 'Liberation Sans',sans-serif;letter-spacing:0.12px;color:#45473f;">0.34</span>
<div class="c v" style="top:530px;left:835px;width:70px;background:#72b321;"></div>
<span style="left:857.5px;top:534px;font:normal 12.5px/16px 'Liberation Sans',sans-serif;letter-spacing:0.12px;color:#45473f;">0.03</span>
<div style="left:901px;top:185px;width:17px;height:381px;background:#f0f0f0"></div>

<!-- v scrollbar -->
<div class="sb" style="left:902px;top:186px;width:15px;height:16px"></div>
<div class="arr" style="left:906px;top:191px;border-top:none;border-bottom:4px solid #707070;"></div>
<div class="sb" style="left:902px;top:469px;width:15px;height:78px"></div>
<div class="sb" style="left:902px;top:548px;width:15px;height:15px"></div>
<div class="arr" style="left:906px;top:554px;"></div>
<!-- h scrollbar -->
<div style="left:476px;top:565px;width:442px;height:16px;background:#f0f0f0"></div>
<div class="sb" style="left:477px;top:565px;width:16px;height:15px"></div>
<div class="arr" style="left:482px;top:569px;border:none;border-top:3.5px solid transparent;border-bottom:3.5px solid transparent;border-right:4px solid #707070;"></div>
<div class="sb" style="left:493px;top:565px;width:386px;height:15px"></div>
<div class="sb" style="left:884px;top:565px;width:16px;height:15px"></div>
<div class="arr" style="left:890px;top:569px;border:none;border-top:3.5px solid transparent;border-bottom:3.5px solid transparent;border-left:4px solid #707070;"></div>

<!-- bottom of right panel -->
<div style="left:473px;top:625px;width:450px;height:4px;background:#f2f2f2;"></div>
<div style="left:0px;top:627px;width:923px;height:2px;background:#eeeeee;"></div>
<div style="left:474px;top:583px;width:446px;height:41px;background:#f8f8f8;border:2px solid #a9a9a9;border-top:none;"></div>
<div style="left:474px;top:624px;width:446px;height:1px;background:#dcdcdc;"></div>
<div style="left:784px;top:584px;width:133px;height:37px;background:#fff;border:1px solid #b4b4b4;"></div>
<svg style="position:absolute;left:900px;top:595px" width="12" height="14" viewBox="0 0 12 14">
<rect x="0.5" y="0.5" width="11" height="13" fill="#fff" stroke="#8a8a8a"/>
<rect x="2" y="2.5" width="8" height="1" fill="#d4d4d4"/><rect x="2" y="4.5" width="8" height="1" fill="#d4d4d4"/>
<rect x="2" y="10" width="2" height="2" fill="#2a6cc0"/><rect x="5" y="8" width="2" height="4" fill="#2a6cc0"/><rect x="8" y="6" width="2" height="6" fill="#2a6cc0"/>
</svg>
<div style="left:782px;top:627px;width:120px;height:4px;background:#fff;border:1px solid #b4b4b4;"></div>
<span style="left:17.3px;top:6px;font:normal 12.5px/16px 'Liberation Sans',sans-serif;letter-spacing:0.61px;color:#3c3c3c;">Open</span>
<span style="left:65.9px;top:6px;font:normal 12.5px/16px 'Liberation Sans',sans-serif;letter-spacing:-0.33px;color:#3c3c3c;">Save</span>
<span style="left:110.0px;top:6px;font:normal 12.5px/16px 'Liberation Sans',sans-serif;letter-spacing:0.02px;color:#3c3c3c;">Views</span>
<span style="left:3.4px;top:608px;font:normal 12.5px/16px 'Liberation Sans',sans-serif;letter-spacing:-0.28px;color:#3c3c3c;">LWT</span>
<span style="left:69.4px;top:607px;font:normal 13.2px/17px 'Liberation Sans',sans-serif;letter-spacing:0.60px;color:#3c3c3c;">Mode</span>
<span style="left:114.4px;top:608px;font:normal 12.5px/16px 'Liberation Sans',sans-serif;letter-spacing:0.04px;color:#3c3c3c;">Perspective</span>
<span style="left:247.2px;top:608px;font:normal 12.5px/16px 'Liberation Sans',sans-serif;letter-spacing:-0.03px;color:#3c3c3c;">Visual Style</span>
<span style="left:322.1px;top:608px;font:normal 12.5px/16px 'Liberation Sans',sans-serif;letter-spacing:0.30px;color:#3c3c3c;">Shaded with edges</span>
<span style="left:485.8px;top:10px;font:normal 22px/29px 'Liberation Sans',sans-serif;letter-spacing:0.00px;color:#4a4a4a;transform:scaleX(0.9210);transform-origin:0 0;">Capacity Ratios</span>
<span style="left:482.1px;top:53px;font:normal 12.5px/16px 'Liberation Sans',sans-serif;letter-spacing:0.09px;color:#3c3c3c;">Summary</span>
<span style="left:548.4px;top:52px;font:normal 12.5px/16px 'Liberation Sans',sans-serif;letter-spacing:-0.24px;color:#3c3c3c;">AISC360-16</span>
<span style="left:626.4px;top:53px;font:normal 12.5px/16px 'Liberation Sans',sans-serif;letter-spacing:-0.00px;color:#3c3c3c;">TDY-2018</span>
<span style="left:694.5px;top:53px;font:normal 12.5px/16px 'Liberation Sans',sans-serif;letter-spacing:-0.01px;color:#3c3c3c;">ACI 318-14</span>
<span style="left:769.5px;top:53px;font:normal 12.5px/16px 'Liberation Sans',sans-serif;letter-spacing:0.26px;color:#3c3c3c;">Rafter Lateral Supports</span>
<span style="left:742.3px;top:79px;font:normal 12.5px/16px 'Liberation Sans',sans-serif;letter-spacing:-0.20px;color:#707070;">AISC360-16</span>
<span style="left:657.1px;top:106px;font:normal 12.5px/16px 'Liberation Sans',sans-serif;letter-spacing:0.26px;color:#707070;">Chapter D and F</span>
<span style="left:770.3px;top:106px;font:normal 12.5px/16px 'Liberation Sans',sans-serif;letter-spacing:0.20px;color:#707070;">Chapter G</span>
<span style="left:508.3px;top:148px;font:normal 13.5px/18px 'Liberation Sans',sans-serif;letter-spacing:0.30px;color:#707070;">ID</span>
<span style="left:532.3px;top:149px;font:normal 12.5px/16px 'Liberation Sans',sans-serif;letter-spacing:0.05px;color:#707070;">Section</span>
<span style="left:659.7px;top:149px;font:normal 12.5px/16px 'Liberation Sans',sans-serif;letter-spacing:0.55px;color:#707070;">kL/r</span>
<span style="left:702.1px;top:140px;font:normal 12.5px/16px 'Liberation Sans',sans-serif;letter-spacing:0.25px;color:#707070;">Flexure &amp;</span>
<span style="left:700.1px;top:157px;font:normal 12.5px/16px 'Liberation Sans',sans-serif;letter-spacing:0.02px;color:#707070;">Axial For...</span>
<span style="left:777.9px;top:149px;font:normal 12.5px/16px 'Liberation Sans',sans-serif;letter-spacing:-0.06px;color:#707070;">Shear Y</span>
<span style="left:841.0px;top:149px;font:normal 12.5px/16px 'Liberation Sans',sans-serif;letter-spacing:0.35px;color:#707070;">Deflection</span>
<span style="left:821.6px;top:596px;font:normal 12.5px/16px 'Liberation Sans',sans-serif;letter-spacing:0.07px;color:#3c3c3c;">Details</span>
<span style="left:28.4px;top:152px;font:bold 24.5px/32px 'DejaVu Sans',sans-serif;letter-spacing:-0.92px;color:#3b42c9;-webkit-text-stroke:0.9px #3b42c9;">Hot Rolled Steel Member Design</span>
<span style="left:28.4px;top:189px;font:bold 24.5px/32px 'DejaVu Sans',sans-serif;letter-spacing:-0.39px;color:#3b42c9;-webkit-text-stroke:0.9px #3b42c9;">according to AISC-360</span>
</body></html>
